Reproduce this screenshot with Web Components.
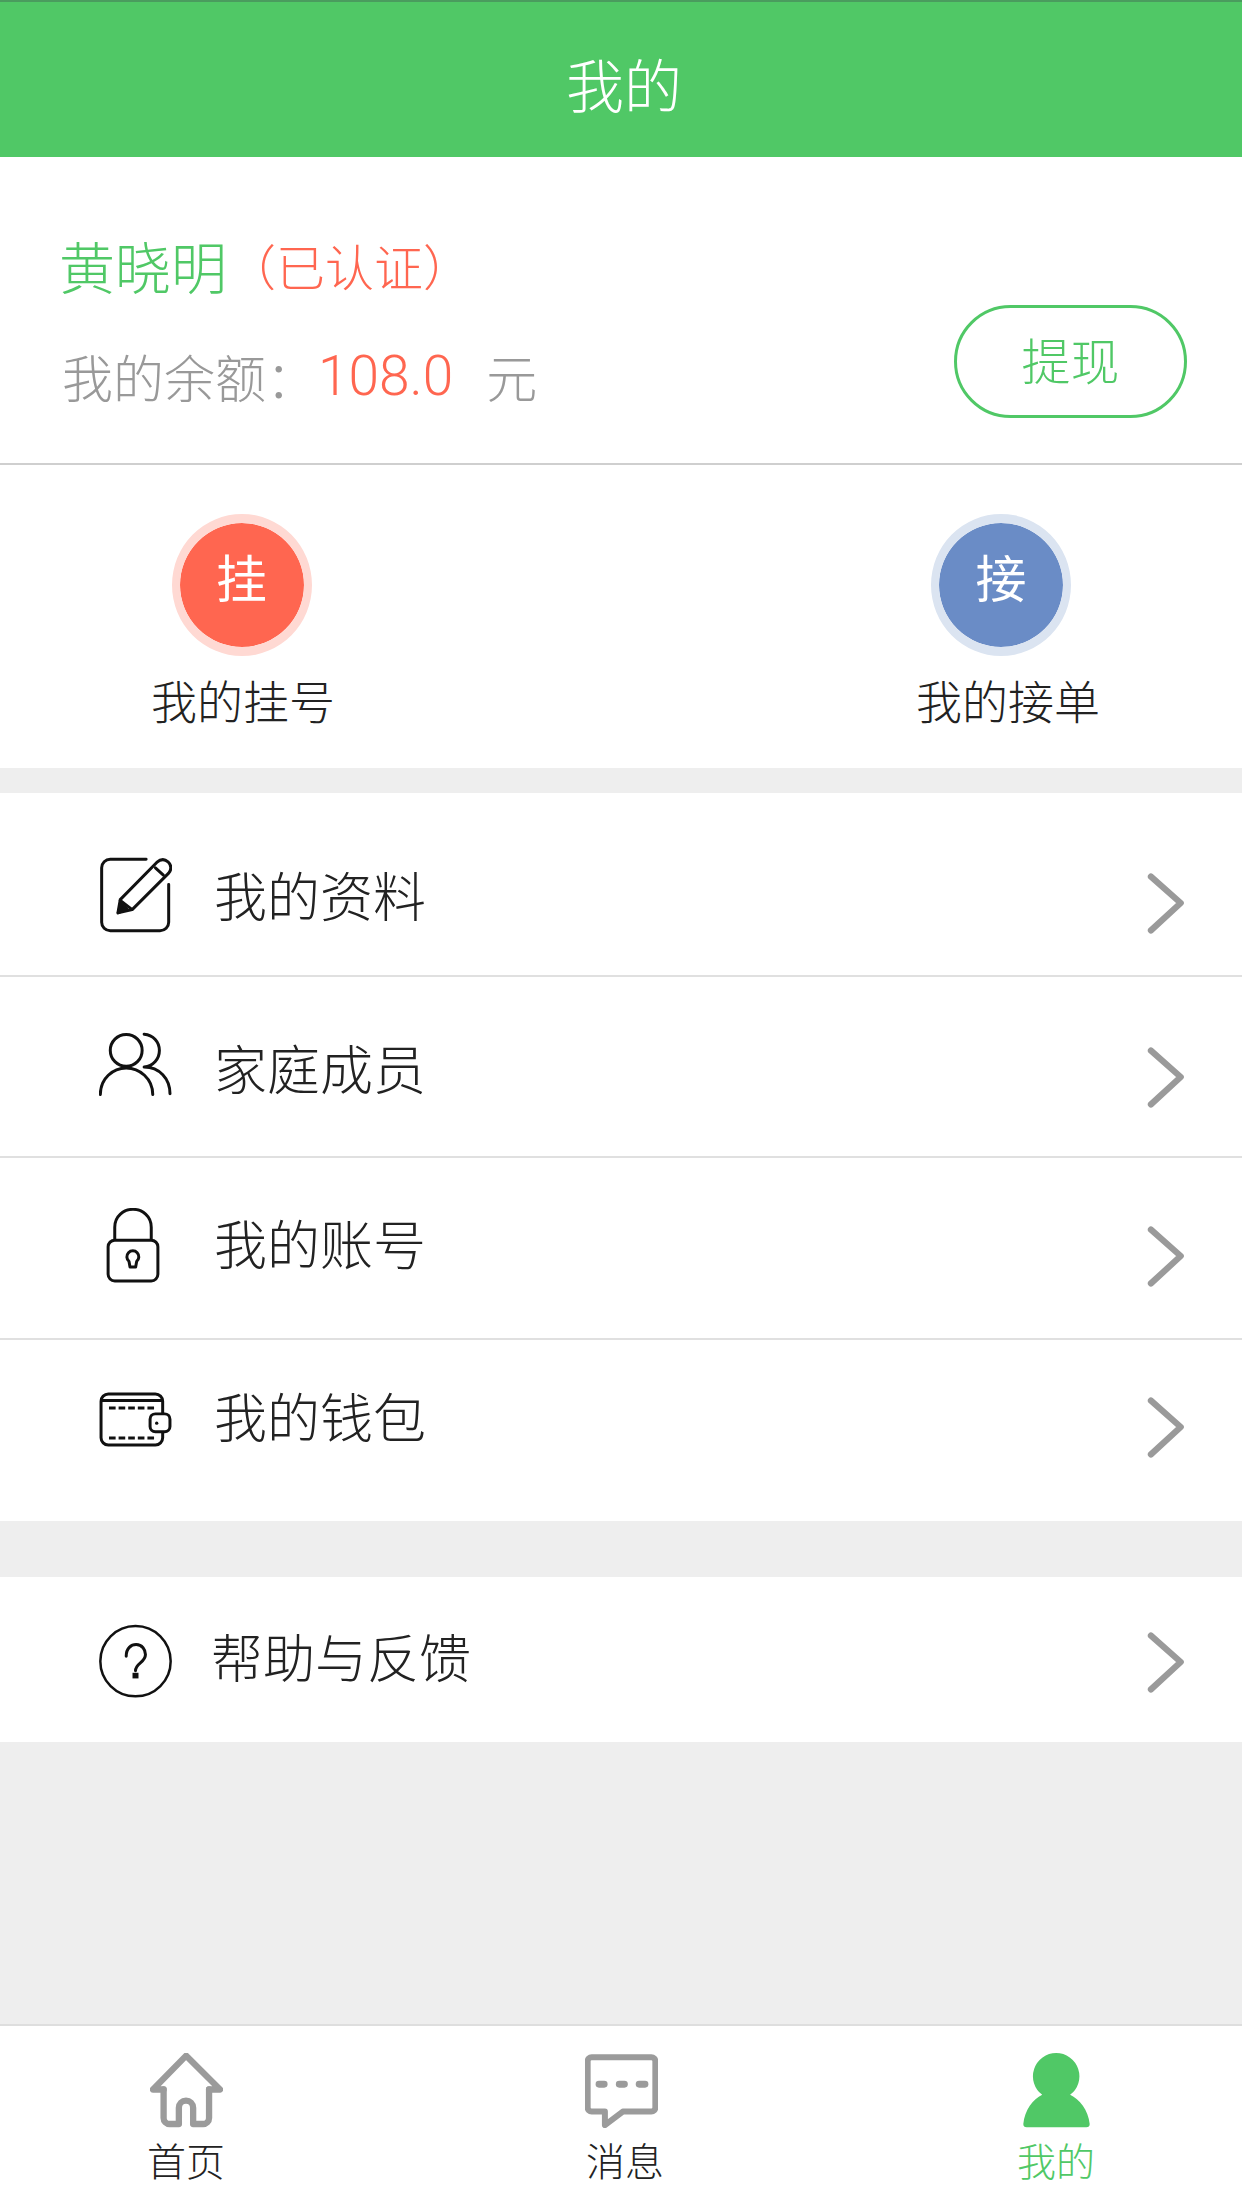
<!DOCTYPE html>
<html lang="zh-CN">
<head>
<meta charset="utf-8">
<title>我的</title>
<style>
  html, body { margin: 0; padding: 0; }
  body {
    width: 1242px; height: 2208px; display: flex; flex-direction: column;
    background: #eeeeee; color: #222;
    font-family: "Noto Sans CJK SC", "Noto Sans", sans-serif; font-weight: 300;
    overflow: hidden;
  }
  .filler { flex: 1; }
  svg { display: block; }
</style>
</head>
<body>
  <app-header>我的</app-header>

  <profile-card name="黄晓明" status="（已认证）" amount="108.0" unit="元" action="提现"></profile-card>

  <shortcut-bar>
    <shortcut-item glyph="挂" label="我的挂号" style="--fill:#ff6650;--ring:#ffd9d3;--nudge:-3px"></shortcut-item>
    <shortcut-item glyph="接" label="我的接单" style="--fill:#6a8cc6;--ring:#dbe4f1;--nudge:-14px"></shortcut-item>
  </shortcut-bar>

  <menu-group style="--gap:25px">
    <menu-row style="--h:184px;--iy:11px;--ty:10px;--ay:19px" divider>
      <svg slot="icon" width="73" height="76" viewBox="58 50 220 228" fill="none" stroke="#111" stroke-width="9" stroke-linecap="round" stroke-linejoin="round">
        <path d="M200 56H92a26 26 0 0 0-26 26V246a26 26 0 0 0 26 26H242a26 26 0 0 0 26-26V132"/>
        <path d="M115 218L122 178L232 66Q250 50 266 64Q282 80 268 98L158 208Z"/>
        <path d="M228 82L252 104M122 180L155 206"/>
        <path d="M116 217L124 190L142 206Z" fill="#111"/>
      </svg>
      我的资料
    </menu-row>
    <menu-row style="--h:181px;--iy:-3px;--ty:0px;--ay:10px" divider>
      <svg slot="icon" width="73" height="64" viewBox="58 50 220 192" fill="none" stroke="#111" stroke-width="9" stroke-linecap="round" stroke-linejoin="round">
        <circle cx="140" cy="105" r="48"/>
        <path d="M62 238C62 190 100 158 140 158C180 158 220 190 220 238"/>
        <path d="M194 56C222 58 240 80 240 105C240 130 222 152 194 155C240 155 272 190 272 236"/>
      </svg>
      家庭成员
    </menu-row>
    <menu-row style="--h:182px;--iy:-3px;--ty:-6px;--ay:8px;--ix:-3px" divider>
      <svg slot="icon" width="54" height="75" viewBox="82 38 162 226" fill="none" stroke="#111" stroke-width="9" stroke-linecap="round" stroke-linejoin="round">
        <rect x="88" y="135" width="150" height="123" rx="20"/>
        <path d="M108 132V96C108 62 135 42 163 42C191 42 218 62 218 96V132"/>
        <path d="M151 199a18 18 0 1 1 23 0l-3 17h-17z"/>
      </svg>
      我的账号
    </menu-row>
    <menu-row style="--h:181px;--iy:-11px;--ty:-16px;--ay:-4px">
      <svg slot="icon" width="73" height="55" viewBox="58 48 220 166" fill="none" stroke="#111" stroke-width="9" stroke-linecap="round" stroke-linejoin="round">
        <path d="M250 112V76a22 22 0 0 0-22-22H86a22 22 0 0 0-22 22V186a22 22 0 0 0 22 22H228a22 22 0 0 0 22-22V170"/>
        <path d="M66 74H248"/>
        <path d="M88 96H228M88 187H228" stroke-linecap="butt" stroke-dasharray="20 9"/>
        <rect x="212" y="114" width="60" height="54" rx="16"/>
        <circle cx="232" cy="142" r="5" fill="#111" stroke="none"/>
      </svg>
      我的钱包
    </menu-row>
  </menu-group>

  <menu-group style="--gap:56px">
    <menu-row style="--h:165px;--iy:2px;--ty:-4px;--ay:2px;--tx:-3px;--ts:52px">
      <svg slot="icon" width="73" height="75" viewBox="58 43 220 226" fill="none" stroke="#111" stroke-width="7.5" stroke-linecap="round" stroke-linejoin="round">
        <circle cx="168" cy="155" r="106"/>
        <path d="M140 140C140 116 155 105 170 105C188 105 198 120 198 135C198 160 168 160 168 184" stroke-width="9"/>
        <rect x="159" y="190" width="18" height="17" fill="#111" stroke="none"/>
      </svg>
      帮助与反馈
    </menu-row>
  </menu-group>

  <div class="filler"></div>

  <tab-bar>
    <tab-item label="首页">
      <svg width="73" height="75" viewBox="88 100 218 226" fill="none" stroke="#9b9b9b" stroke-width="19" stroke-linecap="round" stroke-linejoin="round">
        <path d="M96 210L196 108L298 210H265M96 210H128"/>
        <path d="M128 210V296a18 18 0 0 0 18 18H174V265a21.5 21.5 0 0 1 43 0V314H247a18 18 0 0 0 18-18V210"/>
      </svg>
    </tab-item>
    <tab-item label="消息" style="--lx:8px">
      <svg width="73" height="74" viewBox="72 100 220 222" fill="none" stroke="#9b9b9b" stroke-width="18" stroke-linejoin="round">
        <path d="M92 109H272a12 12 0 0 1 12 12V261a12 12 0 0 1-12 12H186L132 314V273H92a12 12 0 0 1-12-12V121a12 12 0 0 1 12-12Z"/>
        <g fill="#9b9b9b" stroke="none">
          <rect x="104" y="180" width="36" height="21" rx="10"/>
          <rect x="165" y="180" width="36" height="21" rx="10"/>
          <rect x="225" y="180" width="38" height="21" rx="10"/>
        </g>
      </svg>
    </tab-item>
    <tab-item label="我的" active>
      <svg width="69" height="75" viewBox="95 98 202 226">
        <path fill="#50c866" d="M195 98a70 70 0 0 1 42 126C265 238 292 270 296 312Q296 322 286 322H106Q96 322 96 312C100 270 125 238 153 224A70 70 0 0 1 195 98Z"/>
      </svg>
    </tab-item>
  </tab-bar>

<script>
// Small helper: every component is a class with its markup + styles in an open shadow root.
function shadow(el, html) {
  el.attachShadow({ mode: "open" }).innerHTML = html;
}

class AppHeader extends HTMLElement {
  connectedCallback() {
    shadow(this, `
      <style>
        :host {
          display: flex; align-items: center; justify-content: center; flex: none;
          box-sizing: border-box; height: 157px; padding: 7px 0 0 6px;
          background: #50c866; border-top: 2px solid #4a9c5e;
          color: #fff; font-size: 58px;
        }
      </style>
      <slot></slot>`);
  }
}

class ProfileCard extends HTMLElement {
  connectedCallback() {
    const a = (n) => this.getAttribute(n) || "";
    shadow(this, `
      <style>
        :host {
          display: flex; justify-content: space-between; flex: none;
          box-sizing: border-box; height: 308px; padding: 77px 55px 0 59px;
          background: #fff; border-bottom: 2px solid #cfcfcf;
        }
        .name { display: flex; align-items: center; height: 60px; font-size: 56px; color: #50c866; }
        .status { font-size: 49px; color: #ff6650; }
        .balance { display: flex; align-items: center; height: 60px; margin: 52px 0 0 3px; font-size: 51px; color: #999; white-space: nowrap; }
        .amount { font-family: Roboto, "Liberation Sans", sans-serif; font-size: 55px; color: #ff6650; margin: 0 33px 0 1px; }
        button {
          box-sizing: border-box; width: 233px; height: 113px; margin-top: 71px; padding: 0 0 6px;
          border: 3px solid #50c866; border-radius: 57px; background: #fff;
          color: #50c866; font: inherit; font-size: 49px;
        }
      </style>
      <div>
        <div class="name">${a("name")}<span class="status">${a("status")}</span></div>
        <div class="balance">我的余额：<span class="amount">${a("amount")}</span>${a("unit")}</div>
      </div>
      <button type="button">${a("action")}</button>`);
  }
}

class ShortcutBar extends HTMLElement {
  connectedCallback() {
    shadow(this, `
      <style>
        :host {
          display: flex; justify-content: space-between; flex: none;
          box-sizing: border-box; height: 303px; padding: 49px 142px 0 151px;
          background: #fff;
        }
      </style>
      <slot></slot>`);
  }
}

class ShortcutItem extends HTMLElement {
  connectedCallback() {
    shadow(this, `
      <style>
        :host { display: flex; flex-direction: column; align-items: center; width: 184px; }
        .badge {
          box-sizing: border-box; width: 140px; height: 142px; padding-bottom: 18px;
          margin-left: var(--nudge, 0);
          display: flex; align-items: center; justify-content: center;
          border-radius: 50%; border: solid var(--ring); border-width: 9px 8px;
          background: var(--fill); background-clip: padding-box;
          color: #fff; font-size: 51px; font-weight: 400;
        }
        .label { height: 60px; line-height: 60px; margin-top: 13px; font-size: 46px; white-space: nowrap; }
      </style>
      <div class="badge">${this.getAttribute("glyph")}</div>
      <div class="label">${this.getAttribute("label")}</div>`);
  }
}

class MenuGroup extends HTMLElement {
  connectedCallback() {
    shadow(this, `
      <style>
        :host { display: block; flex: none; margin-top: var(--gap, 0); background: #fff; }
      </style>
      <slot></slot>`);
  }
}

class MenuRow extends HTMLElement {
  connectedCallback() {
    // --iy / --ty / --ay shift icon, text and arrow from the row centre; a margin moves a centred item half as far.
    shadow(this, `
      <style>
        :host {
          display: flex; align-items: center; box-sizing: border-box;
          height: var(--h); padding: 0 57px 0 99px;
        }
        :host([divider]) { border-bottom: 2px solid #e0e0e0; }
        .icon {
          flex: none; width: 73px; display: flex; justify-content: center;
          margin-top: calc(var(--iy, 0px) * 2);
        }
        .icon slot { display: block; margin-left: calc(var(--ix, 0px) * 2); }
        .text {
          flex: 1; margin: calc(var(--ty, 0px) * 2) 0 0 calc(42px + var(--tx, 0px));
          font-size: var(--ts, 53px); line-height: 60px; white-space: nowrap;
        }
        .arrow { flex: none; margin-top: calc(var(--ay, 0px) * 2); }
      </style>
      <div class="icon"><slot name="icon"></slot></div>
      <div class="text"><slot></slot></div>
      <svg class="arrow" width="38" height="64" viewBox="80 60 115 190" fill="none" stroke="#9a9a9a" stroke-width="19" stroke-linecap="round" stroke-linejoin="round">
        <path d="M92 75L182 155L92 238"/>
      </svg>`);
  }
}

class TabBar extends HTMLElement {
  connectedCallback() {
    shadow(this, `
      <style>
        :host {
          display: flex; justify-content: space-between; flex: none;
          box-sizing: border-box; height: 184px; padding: 27px 147px 0 147px;
          background: #fff; border-top: 2px solid #dedede;
        }
      </style>
      <slot></slot>`);
  }
}

class TabItem extends HTMLElement {
  connectedCallback() {
    shadow(this, `
      <style>
        :host { display: flex; flex-direction: column; align-items: center; width: 78px; }
        :host([active]) .label { color: #50c866; }
        .icon { height: 75px; display: flex; align-items: center; }
        .label { height: 44px; line-height: 44px; margin: 9px 0 0 var(--lx, 0); font-size: 39px; white-space: nowrap; }
      </style>
      <div class="icon"><slot></slot></div>
      <div class="label">${this.getAttribute("label")}</div>`);
  }
}

customElements.define("app-header", AppHeader);
customElements.define("profile-card", ProfileCard);
customElements.define("shortcut-bar", ShortcutBar);
customElements.define("shortcut-item", ShortcutItem);
customElements.define("menu-group", MenuGroup);
customElements.define("menu-row", MenuRow);
customElements.define("tab-bar", TabBar);
customElements.define("tab-item", TabItem);
</script>
</body>
</html>
